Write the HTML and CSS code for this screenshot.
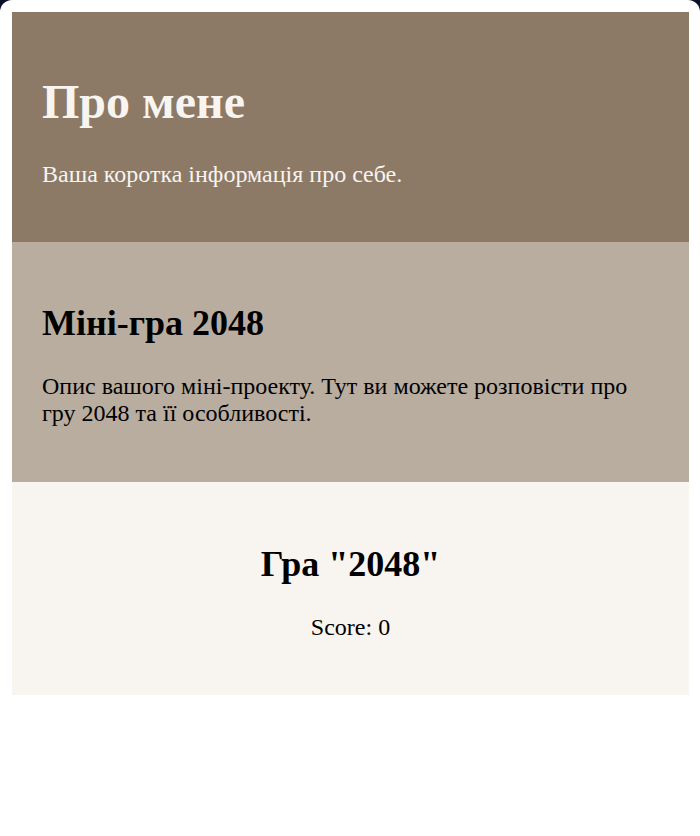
FILE: index.html
```html
<!DOCTYPE html>
<html lang="uk">
<head>
<meta charset="utf-8">
<title>Про мене</title>
<link rel="stylesheet" href="styles.css">
</head>
<body>
<div class="page">
  <header class="hero">
    <h1 class="hero-title">Про мене</h1>
    <p class="hero-text">Ваша коротка інформація про себе.</p>
  </header>
  <section class="project">
    <h2 class="project-title">Міні-гра 2048</h2>
    <p class="project-text">Опис вашого міні-проекту. Тут ви можете розповісти про гру 2048 та її особливості.</p>
  </section>
  <section class="game">
    <h2 class="game-title">Гра "2048"</h2>
    <p class="game-score">Score: 0</p>
  </section>
</div>
</body>
</html>
```

FILE: styles.css
```css
html {
  background: #0b1026;
  height: 100%;
}
body {
  margin: 0;
  min-height: 100%;
  background: #ffffff;
  border-radius: 12px 12px 0 0;
  font-family: "Liberation Serif", "Times New Roman", serif;
  font-size: 24px;
  padding: 12px 11px 0 12px;
  box-sizing: border-box;
}
.page {
  display: flex;
  flex-direction: column;
}
.hero {
  background: #8c7a67;
  color: #f8f4f0;
  padding: 40px 30px;
}
.hero-title {
  font-size: 48px;
  line-height: 55px;
  margin: 22px 0 31px;
}
.hero-text {
  margin: 0 0 14px;
  line-height: 28px;
}
.project {
  background: #b9ada0;
  color: #000;
  padding: 40px 30px;
}
.project-title {
  font-size: 36px;
  line-height: 40px;
  margin: 21px 0 30px;
}
.project-text {
  margin: 0 0 15px;
  line-height: 27px;
}
.game {
  background: #f8f4f0;
  color: #000;
  padding: 40px 30px;
  text-align: center;
}
.game-title {
  font-size: 36px;
  line-height: 40px;
  margin: 22px 0 29px;
}
.game-score {
  margin: 0 0 14px;
  line-height: 28px;
}
```
